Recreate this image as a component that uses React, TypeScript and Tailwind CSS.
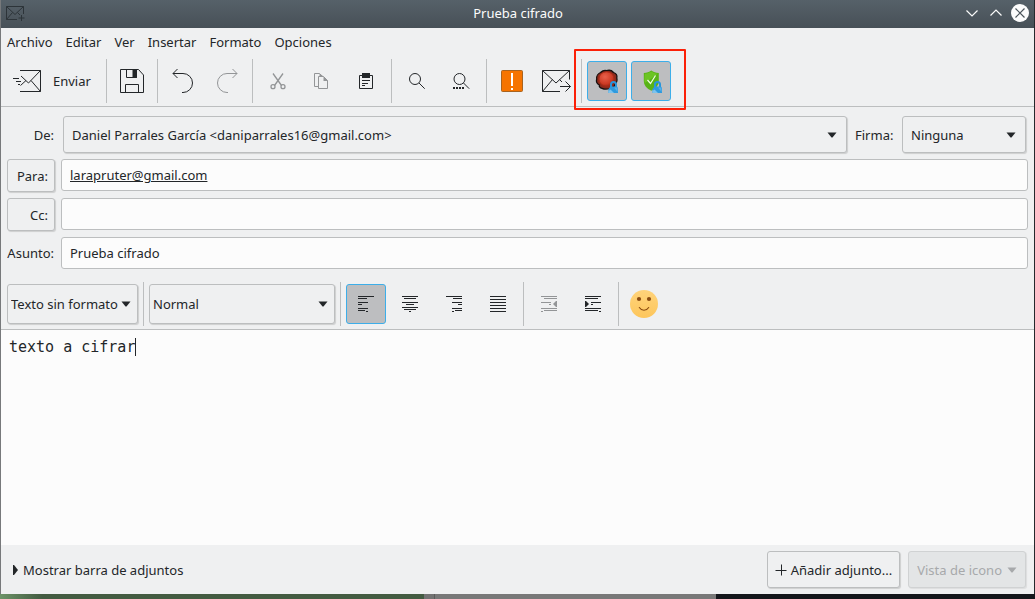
import React, { useState } from "react";
import type { ReactNode } from "react";

const separator = "mx-[5px] h-11 w-px shrink-0 bg-[#bcbebf]";
const raised = "rounded-[3px] border border-[#bcbebf] bg-[#eff0f1] shadow-[1px_1px_1px_rgba(0,0,0,0.14)]";
const field = "h-8 min-w-0 flex-1 rounded-[3px] border border-[#bcbebf] bg-[#fcfcfc] px-2 outline-none";

type Bar = [y: number, from: number, to: number];

function Glyph({ children }: { children: ReactNode }) {
  return (
    <svg viewBox="0 0 32 32" className="size-8" fill="none" stroke="currentColor" aria-hidden="true">
      {children}
    </svg>
  );
}

function Bars({ rows, marker }: { rows: Bar[]; marker?: string }) {
  return (
    <Glyph>
      <g fill="currentColor" stroke="none">
        {rows.map(([y, from, to]) => (
          <rect key={y} x={from} y={y} width={to - from} height="1" />
        ))}
        {marker && <path d={marker} />}
      </g>
    </Glyph>
  );
}

function ToolButton({
  label,
  checked,
  disabled,
  children,
}: {
  label: string;
  checked?: boolean;
  disabled?: boolean;
  children: ReactNode;
}) {
  return (
    <button
      type="button"
      aria-label={label}
      aria-pressed={checked}
      disabled={disabled}
      className={
        "flex size-10 shrink-0 items-center justify-center rounded-[3px] border " +
        (checked ? "border-[#3daee9] bg-[#bdbec0] " : "border-transparent ") +
        (disabled ? "text-[#939597]" : "text-[#232629]")
      }
    >
      {children}
    </button>
  );
}

function Arrow({ className = "" }: { className?: string }) {
  return (
    <svg viewBox="0 0 10 6" className={"pointer-events-none h-1.5 w-2.5 shrink-0 " + className} fill="currentColor" aria-hidden="true">
      <path d="M.5 .5h9L5.500 5.500h-1z" />
    </svg>
  );
}

function Combo({
  id,
  label,
  options,
  size,
  compact,
}: {
  id: string;
  label?: string;
  options: string[];
  size: string;
  compact?: boolean;
}) {
  return (
    <div className={"relative " + size}>
      <select
        id={id}
        aria-label={label}
        className={"h-full w-full appearance-none outline-none " + raised + (compact ? " pl-[3px]" : " pl-2")}
      >
        {options.map((o) => (
          <option key={o}>{o}</option>
        ))}
      </select>
      <Arrow className={"absolute top-1/2 -translate-y-1/2 " + (compact ? "right-[7px]" : "right-2.5")} />
    </div>
  );
}

function Padlock() {
  return (
    <g>
      <path d="M20 22.500v-3a2.500 2.500 0 0 1 5 0v3" stroke="#2795dc" strokeWidth="2" />
      <path d="M17.500 24l2-2.500H26l1 1.500v5h-9.500z" fill="#2f9ade" stroke="none" />
      <path d="M17.500 26l2-1.500 3.500 3.500h-5.500z" fill="#7cc3ee" stroke="none" />
      <path d="M23 22.500h3.500V27z" fill="#58b0e6" stroke="none" />
    </g>
  );
}

const leftRows: Bar[] = [[8, 8, 24], [10, 8, 17], [14, 8, 18], [16, 8, 12], [20, 8, 18], [22, 8, 15], [23, 16, 18]];
const centerRows: Bar[] = [[8, 8, 24], [10, 10, 22], [14, 8, 24], [16, 12, 20], [19, 8, 24], [21, 10, 22], [23, 15, 17]];
const rightRows: Bar[] = [[8, 8, 24], [10, 15, 24], [14, 14, 24], [16, 20, 24], [20, 14, 24], [22, 17, 24], [23, 14, 16]];
const justifyRows: Bar[] = [[8, 8, 24], [11, 8, 24], [14, 8, 24], [17, 8, 24], [20, 8, 24], [23, 8, 24]];
const outdentRows: Bar[] = [[8, 8, 24], [10, 11, 24], [14, 8, 18], [16, 16, 18], [20, 8, 24], [22, 11, 24], [23, 8, 10]];
const indentRows: Bar[] = [[8, 8, 24], [10, 8, 21], [14, 14, 24], [16, 14, 16], [20, 8, 24], [22, 8, 21], [23, 22, 24]];

const menus = ["Archivo", "Editar", "Ver", "Insertar", "Formato", "Opciones"];

function TitleBar() {
  return (
    <header className="flex h-7 items-center bg-linear-to-b from-[#566169] to-[#475057] pr-1 pb-0.5 pl-[5px] text-[#fcfcfc]">
      <div className="flex-1">
        <svg viewBox="0 0 20 16" className="h-4 w-5" fill="none" stroke="#2d3439" aria-hidden="true">
          <path d="M11 14.500H.5V1.500h17V9M.5 1.500l8.500 8 8.500-8M.5 14.500l6-7M11.500 7.500l2.500 2.500M15.500 10v6M12.500 13h6" />
        </svg>
      </div>
      <h1>Prueba cifrado</h1>
      <div className="flex flex-1 justify-end gap-1">
        <button type="button" aria-label="Minimizar" className="flex size-5 items-center justify-center">
          <svg viewBox="0 0 20 20" className="size-5" fill="none" stroke="currentColor" strokeWidth="1.200" aria-hidden="true"><path d="M4.500 7.500l5.500 5.500 5.500-5.500" /></svg>
        </button>
        <button type="button" aria-label="Maximizar" className="flex size-5 items-center justify-center">
          <svg viewBox="0 0 20 20" className="size-5" fill="none" stroke="currentColor" strokeWidth="1.200" aria-hidden="true"><path d="M4.500 12.500l5.500-5.500 5.500 5.500" /></svg>
        </button>
        <button type="button" aria-label="Cerrar" className="flex size-5 items-center justify-center">
          <svg viewBox="0 0 20 20" className="size-5" fill="none" aria-hidden="true">
            <circle cx="10" cy="10" r="9" fill="#fcfcfc" />
            <path d="M5.500 5.500l9 9M14.500 5.500l-9 9" stroke="#4a535a" strokeWidth="1.200" />
          </svg>
        </button>
      </div>
    </header>
  );
}

function MainToolbar() {
  return (
    <div role="toolbar" aria-label="Principal" className="flex items-center border-b border-[#bcbebf] pt-[3px] pb-[3px] pl-1.5">
      <button type="button" className="flex h-10 items-center gap-3 pr-2.5 pl-1.5">
        <svg viewBox="0 0 28 22" className="h-[22px] w-7" fill="none" stroke="currentColor" aria-hidden="true">
          <path d="M7 .5h20.500v21H7M27.500.5L15.500 13 8 6M27.500 21.500l-9.500-11M13 10.500l-5.500 5M0 8.500h6M3 11.500h5M5 14.500h2" />
        </svg>
        Enviar
      </button>
      <span className={separator} />
      <ToolButton label="Guardar">
        <Glyph>
          <path d="M4.500 4.500h18l5 5.500v17.500h-23zM10.500 4.500v8h10v-8M9.500 27.500v-8h13v8" />
          <path d="M17 5h3.500v7.500H17z" fill="currentColor" />
        </Glyph>
      </ToolButton>
      <span className={separator} />
      <div className="flex gap-1">
        <ToolButton label="Deshacer">
          <Glyph><path d="M10.500 4L6 8.500l4.500 4.500M6 8.500h10a9.500 9.500 0 0 1 0 19h-1" /></Glyph>
        </ToolButton>
        <ToolButton label="Rehacer" disabled>
          <Glyph><path d="M21.500 4L26 8.500 21.500 13M26 8.500H16a9.500 9.500 0 0 0 0 19h1" /></Glyph>
        </ToolButton>
      </div>
      <span className={separator} />
      <div className="flex gap-1">
        <ToolButton label="Cortar" disabled>
          <Glyph>
            <path d="M11 8.500l8.500 12M21 8.500l-8.500 12" strokeWidth="1.300" />
            <circle cx="11" cy="21.700" r="2" strokeWidth="1.300" />
            <circle cx="21" cy="21.700" r="2" strokeWidth="1.300" />
          </Glyph>
        </ToolButton>
        <ToolButton label="Copiar" disabled>
          <Glyph>
            <path d="M12.500 21.500h-4v-13h5l3 3M12.500 11.500v12h9v-8l-4-4z" />
            <path d="M13.500 8.500v3h4v4.500h4.500l-5-5z" fill="currentColor" stroke="none" />
          </Glyph>
        </ToolButton>
        <ToolButton label="Pegar">
          <Glyph>
            <path d="M9.500 10.500h13v13h-13zM12 15.500h8M12 18.500h6M12 20.500h3" />
            <path d="M12 8h8v5h-8z" fill="currentColor" stroke="none" />
          </Glyph>
        </ToolButton>
      </div>
      <span className={separator} />
      <div className="flex gap-1">
        <ToolButton label="Buscar">
          <Glyph><circle cx="14" cy="14" r="5.500" /><path d="M18 18l5.700 5.700" /></Glyph>
        </ToolButton>
        <ToolButton label="Sustituir">
          <Glyph>
            <circle cx="14.500" cy="14" r="5.500" />
            <path d="M18.500 18l5.700 5.700" />
            <path d="M8 23h2M11 23h2M14 23h2M17 23h2" strokeWidth="2" />
          </Glyph>
        </ToolButton>
      </div>
      <span className={separator} />
      <div className="flex gap-1">
        <ToolButton label="Urgente">
          <Glyph>
            <rect x="5.500" y="5.500" width="21" height="21" rx="1" fill="#f67400" stroke="#a8631f" />
            <path d="M15 8h2v13h-2zM15 23h2v2h-2z" fill="#fff" stroke="none" />
          </Glyph>
        </ToolButton>
        <ToolButton label="Solicitar confirmación">
          <Glyph><path d="M20 26.500H2.500v-21h27v9M2.500 5.500L16 18 29.500 5.500M2.500 26.500l10-12M19.500 14.500l2.500 2.500M20 21.500h10.500M25.500 16.500l5 5-5 5" /></Glyph>
        </ToolButton>
      </div>
      <span className={separator} />
      <div className="relative flex gap-1">
        <ToolButton label="Firmar mensaje" checked>
          <Glyph>
            <defs>
              <radialGradient id="wax" cx=".4" cy=".35" r=".7">
                <stop offset="0" stopColor="#e8604a" />
                <stop offset=".7" stopColor="#cc3a24" />
                <stop offset="1" stopColor="#98230f" />
              </radialGradient>
            </defs>
            <path d="M9.500 7.500c1.800-1.600 4-2.300 6-1.800 2.500-.8 5.500 0 7 1.800 2.400.8 3.800 3 3.300 5.500.5 2.400-.2 4.800-1.800 6.200-.8 2.600-2.500 4.300-5 4.300-2.500.8-6 .8-8-.2-2-.3-3-1.600-2.700-3.300C6 18.800 5 16.500 5.700 14c-.5-2.800 1.500-5.500 3.800-6.500z" fill="#8f2a1c" stroke="#17100f" strokeWidth="1.300" />
            <ellipse cx="15.500" cy="14" rx="7.600" ry="7.300" fill="url(#wax)" stroke="#a82c18" />
            <Padlock />
          </Glyph>
        </ToolButton>
        <ToolButton label="Cifrar mensaje" checked>
          <Glyph>
            <path d="M16.300 5.500c2 1.500 4.500 2.500 7.500 2.500v7.500c0 5-3 8-7.500 10.200-4.500-2.200-7.500-5.200-7.500-10.200V8c3 0 5.500-1 7.500-2.500z" fill="#58b316" stroke="none" />
            <path d="M16.300 6.500c2 1.300 4 2 6.500 2.200L9.800 18c-.4-1-.5-6.500 0-9.300 2.500-.2 4.500-1 6.500-2.200z" fill="#6cc424" stroke="none" />
            <path d="M12.500 15l3 3.500 5-8" stroke="#f2ffe6" strokeWidth="1.200" />
            <Padlock />
          </Glyph>
        </ToolButton>
        <div className="pointer-events-none absolute -top-3 -right-[15px] -bottom-[9px] -left-[13px] rounded-[1px] border-2 border-[#fb2008]" />
      </div>
    </div>
  );
}

function Envelope() {
  const [to, setTo] = useState("larapruter@gmail.com");
  const [cc, setCc] = useState("");
  const [subject, setSubject] = useState("Prueba cifrado");
  return (
    <div className="flex flex-col gap-1.5 pt-[9px] pr-1.5 pl-1.5">
      <div className="flex h-[37px] items-center gap-2 pr-0.5">
        <label htmlFor="from" className="w-12 pr-px text-right">De:</label>
        <Combo id="from" options={["Daniel Parrales García <daniparrales16@gmail.com>"]} size="h-full min-w-0 flex-1" />
        <label htmlFor="signature" className="w-[39px]">Firma:</label>
        <Combo id="signature" options={["Ninguna"]} size="h-full w-31" />
      </div>
      <div className="flex h-[33px] gap-1.5">
        <button type="button" className={"w-12 pr-1.5 text-right " + raised}>Para:</button>
        <input aria-label="Para" value={to} onChange={(e) => setTo(e.target.value)} className={"underline " + field} />
      </div>
      <div className="flex h-[33px] gap-1.5">
        <button type="button" className={"w-12 pr-1.5 text-right " + raised}>Cc:</button>
        <input aria-label="Cc" value={cc} onChange={(e) => setCc(e.target.value)} className={field} />
      </div>
      <div className="flex h-[33px] gap-1.5">
        <label htmlFor="subject" className="flex h-8 w-12 items-center justify-end pr-px whitespace-nowrap">Asunto:</label>
        <input id="subject" value={subject} onChange={(e) => setSubject(e.target.value)} className={field} />
      </div>
    </div>
  );
}

function FormatToolbar() {
  return (
    <div role="toolbar" aria-label="Formato" className="flex items-center border-b border-[#bcbebf] pt-3 pb-[3px] pl-1.5">
      <Combo id="mode" label="Modo" options={["Texto sin formato"]} size="h-10 w-[131px]" compact />
      <span className={separator} />
      <Combo id="style" label="Estilo de párrafo" options={["Normal"]} size="h-10 w-[186px]" compact />
      <span className={separator} />
      <div className="flex gap-1">
        <ToolButton label="Alinear a la izquierda" checked><Bars rows={leftRows} /></ToolButton>
        <ToolButton label="Centrar"><Bars rows={centerRows} /></ToolButton>
        <ToolButton label="Alinear a la derecha"><Bars rows={rightRows} /></ToolButton>
        <ToolButton label="Justificar"><Bars rows={justifyRows} /></ToolButton>
      </div>
      <span className={separator} />
      <div className="flex gap-1">
        <ToolButton label="Reducir sangría" disabled><Bars rows={outdentRows} marker="M24 13v6h-1l-3-3 3-3z" /></ToolButton>
        <ToolButton label="Aumentar sangría"><Bars rows={indentRows} marker="M8 13v6h1l3-3-3-3z" /></ToolButton>
      </div>
      <span className={separator} />
      <ToolButton label="Añadir emoticono">
        <svg viewBox="0 0 28 28" className="size-7" aria-hidden="true">
          <defs>
            <linearGradient id="face" x1="0" y1="0" x2="0" y2="1">
              <stop offset="0" stopColor="#ffd37a" />
              <stop offset="1" stopColor="#fdc65c" />
            </linearGradient>
          </defs>
          <circle cx="14" cy="14" r="14" fill="url(#face)" />
          <circle cx="9" cy="9" r="2.100" fill="#8a4b10" />
          <circle cx="19" cy="9" r="2.100" fill="#8a4b10" />
          <path d="M9.300 17.500c2.200 3.600 7.200 3.600 9.400 0" fill="none" stroke="#8a4b10" strokeWidth="1.100" strokeLinecap="round" />
        </svg>
      </ToolButton>
    </div>
  );
}

export default function App() {
  const [body, setBody] = useState("texto a cifrar");
  return (
    <div className="flex min-h-screen flex-col bg-[#77797b] font-['Noto_Sans',sans-serif] text-[13px] leading-5 text-[#232629]">
      <div className="flex flex-1 flex-col border-r border-l border-r-[#25292d] border-l-[#77797b] bg-[#eff0f1]">
        <TitleBar />
        <nav className="flex h-7 items-center gap-[13px] pl-1.5">
          {menus.map((m) => (
            <button key={m} type="button">{m}</button>
          ))}
        </nav>
        <MainToolbar />
        <Envelope />
        <FormatToolbar />
        <div className="relative flex flex-1 bg-[#fcfcfc]">
          <textarea
            aria-label="Mensaje"
            value={body}
            onChange={(e) => setBody(e.target.value)}
            className="flex-1 resize-none px-2 py-[7px] font-['DejaVu_Sans_Mono',monospace] text-[15px] leading-5 outline-none"
          />
          <span className="absolute top-2 left-[134px] h-[18px] w-px bg-[#232629]" />
        </div>
        <footer className="flex items-center gap-2 py-1.5 pr-2 pl-3">
          <button type="button" className="flex items-center gap-1">
            <svg viewBox="0 0 6 10" className="h-2.5 w-1.5" fill="currentColor" aria-hidden="true"><path d="M0 0h1l4 5-4 5H0z" /></svg>
            Mostrar barra de adjuntos
          </button>
          <button type="button" className={"ml-auto flex h-[37px] items-center gap-1 px-[7px] " + raised}>
            <svg viewBox="0 0 12 12" className="size-3" stroke="currentColor" aria-hidden="true"><path d="M.5 6.500h11M6.500.5v11" /></svg>
            Añadir adjunto...
          </button>
          <button type="button" disabled className="flex h-[37px] items-center gap-[5px] rounded-[3px] border border-[#d0d2d3] bg-[#e3e5e6] px-2 text-[#a7a9ab] shadow-[1px_1px_1px_rgba(0,0,0,0.08)]">
            Vista de icono
            <Arrow />
          </button>
        </footer>
      </div>
      <div className="flex h-[5px]">
        <div className="w-[41%] bg-linear-to-r from-[#6d9468] via-[#435b41] via-10% to-[#435b41]" />
        <div className="w-[1%] border-r border-[#5c5c5c] bg-[#737373]" />
        <div className="w-[27.2%] bg-[#787878]" />
        <div className="flex-1 bg-[#14161b]" />
      </div>
    </div>
  );
}
